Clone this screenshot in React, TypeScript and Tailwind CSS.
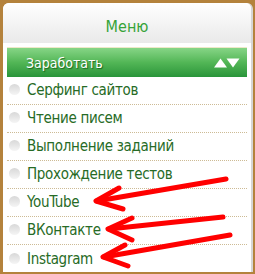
import React from "react";

const items = [
  "Серфинг сайтов",
  "Чтение писем",
  "Выполнение заданий",
  "Прохождение тестов",
  "YouTube",
  "ВКонтакте",
  "Instagram",
];

export default function App() {
  return (
    <div
      className="relative w-[255px] h-[274px] bg-[#b4823c] pt-[3px] pl-[3px] pr-[2px] pb-[2px] flex overflow-hidden"
      style={{ fontFamily: '"DejaVu Sans Condensed", "DejaVu Sans", sans-serif' }}
    >
      <div className="flex-1 flex flex-col bg-white rounded-t-[6px] border-r-2 border-[#d6d6d6]">
        <div className="h-[40px] shrink-0 rounded-t-[6px] bg-gradient-to-b from-[#ffffff] to-[#e9e9e9] flex items-center justify-center">
          <span className="text-[16px] text-[#36a338] leading-none pt-[7px]">Меню</span>
        </div>
        <div className="px-[4px] pt-[4px] flex flex-col">
          <div className="h-[30px] border-t border-[#eee8c8] bg-gradient-to-b from-[#86d586] via-[#52b656] to-[#28953a] flex items-center justify-between pl-[19px] pr-[7px]">
            <span
              className="text-white text-[14px] leading-none"
              style={{ textShadow: "1px 1px 1px rgba(0,60,0,0.6)" }}
            >
              Заработать
            </span>
            <svg width="26" height="10" viewBox="0 0 26 10">
              <polygon points="0,9.5 6.5,0.5 13,9.5" fill="#ffffff" />
              <polygon points="12.5,0.5 25.5,0.5 19,9.5" fill="#ffffff" />
            </svg>
          </div>
          {items.map((t, i) => (
            <div
              key={t}
              className={
                "h-[28px] flex items-center pl-[2px] " +
                (i < items.length - 1 ? "border-b border-dotted border-[#cdbb95]" : "")
              }
            >
              <span className="w-[11px] h-[11px] rounded-full bg-gradient-to-b from-[#d8d8d8] to-[#f5f5f5] mr-[7px] mb-[2px] shrink-0" />
              <span className="text-[15px] text-[#276b26] leading-none tracking-[-0.3px]">{t}</span>
            </div>
          ))}
        </div>
      </div>
      <svg
        className="absolute left-0 top-0 pointer-events-none"
        width="255"
        height="274"
        viewBox="0 0 255 274"
      >
        <g stroke="#ff0000" strokeWidth="5" strokeLinecap="round" strokeLinejoin="round" fill="none">
          <line x1="97" y1="201" x2="226" y2="179" />
          <polyline points="119,188 96,201 123,209" />
          <line x1="109" y1="229" x2="223" y2="217" />
          <polyline points="132,218 108,229 132,240" />
          <line x1="104" y1="257" x2="230" y2="235" />
          <polyline points="125,245 103,257 128,266" />
        </g>
      </svg>
    </div>
  );
}
